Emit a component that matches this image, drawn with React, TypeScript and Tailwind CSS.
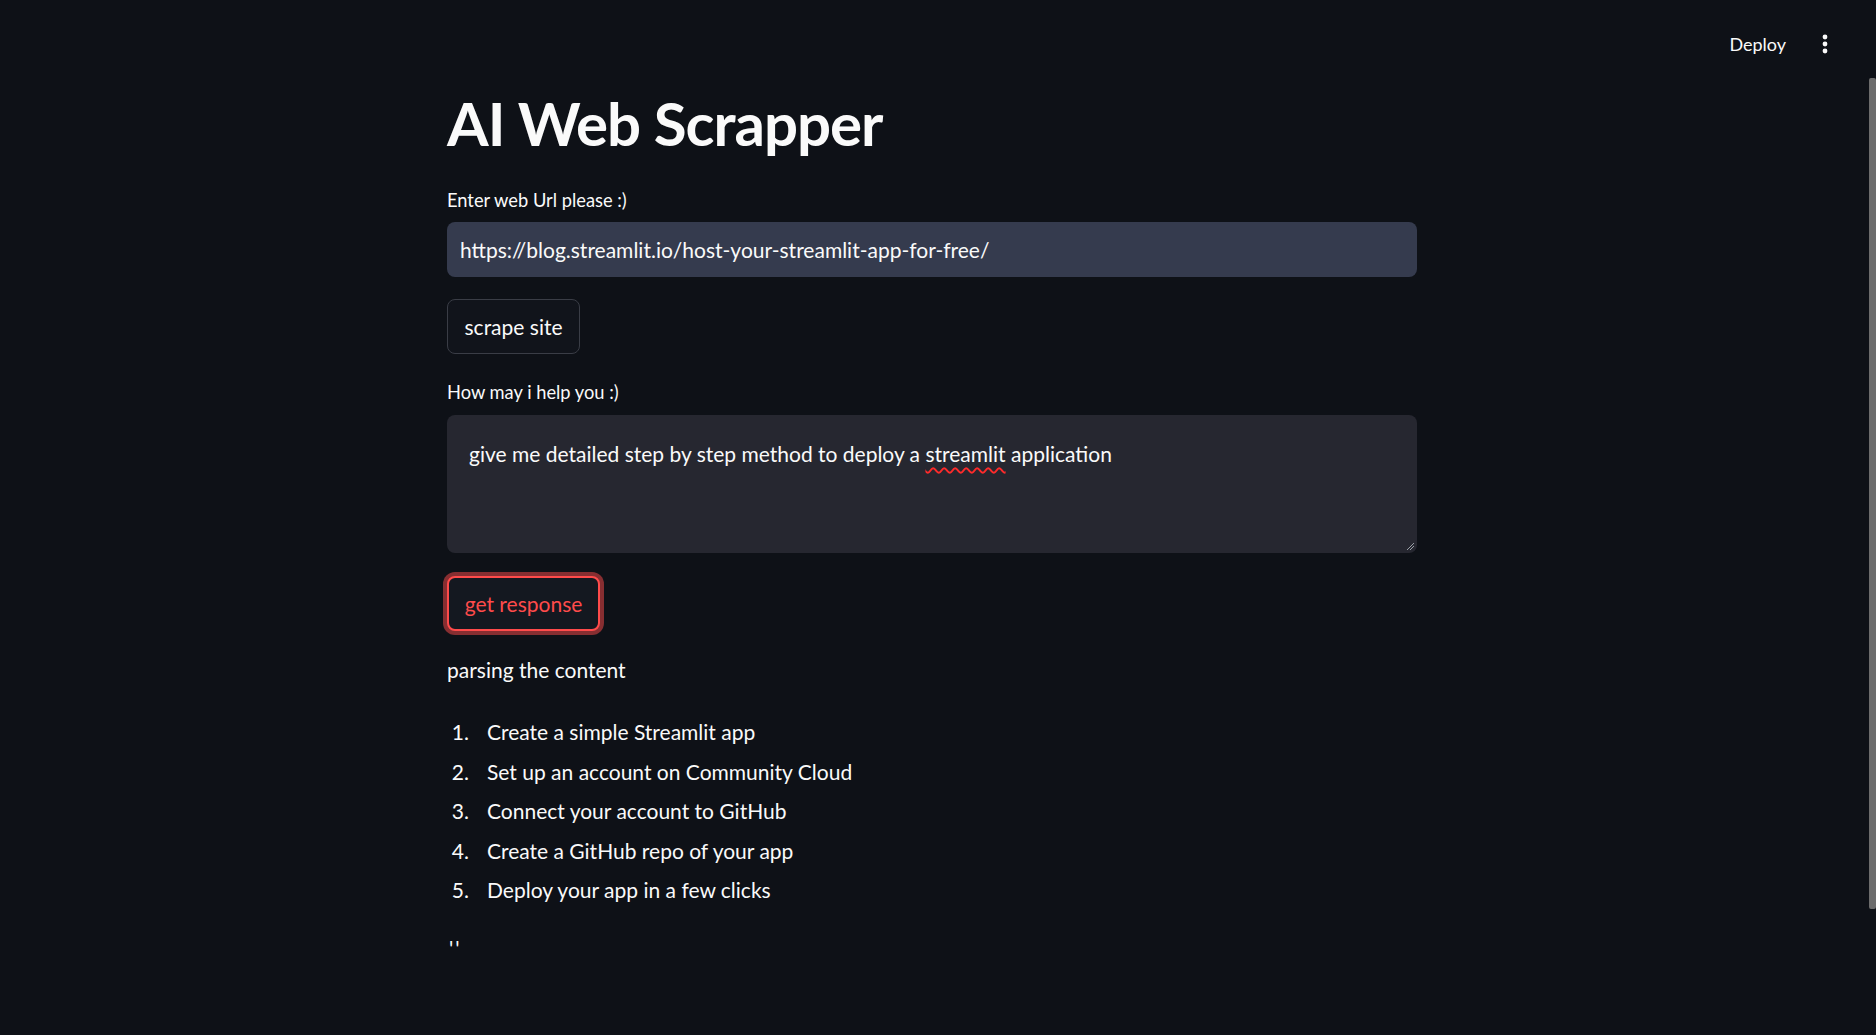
import React from "react";

export default function App() {
  const steps = [
    "Create a simple Streamlit app",
    "Set up an account on Community Cloud",
    "Connect your account to GitHub",
    "Create a GitHub repo of your app",
    "Deploy your app in a few clicks",
  ];
  return (
    <div className="relative h-[1035px] w-full overflow-hidden bg-[#0e1117] text-[#fafafa] [font-family:Lato,'Noto_Sans',sans-serif]">
      {/* header */}
      <div className="flex h-[88px] items-center justify-end pr-[47px]">
        <span className="text-[18px] leading-none text-[#fafafa]">Deploy</span>
        <svg className="ml-[35px]" width="8" height="20" viewBox="0 0 8 20">
          <circle cx="4" cy="3" r="2.4" fill="#fafafa" />
          <circle cx="4" cy="10" r="2.4" fill="#fafafa" />
          <circle cx="4" cy="17" r="2.4" fill="#fafafa" />
        </svg>
      </div>

      {/* main */}
      <div className="flex justify-center pr-[12px]">
        <div className="flex w-[970px] flex-col">
          <h1 className="mt-[4px] text-[60px] font-bold leading-[62px] tracking-[-1px]">
            AI Web Scrapper
          </h1>

          <label className="mt-[34px] text-[18.3px] leading-[24px]">Enter web Url please :)</label>
          <div className="mt-[10px] flex h-[55px] items-center rounded-[8px] bg-[#353b4e] pl-[13px] text-[21px]">
            https://blog.streamlit.io/host-your-streamlit-app-for-free/
          </div>

          <div className="mt-[22px]">
            <button className="h-[55px] w-[133px] rounded-[8px] border border-[#3a3d46] bg-[#11141b] text-[21px] text-[#fafafa]">
              scrape site
            </button>
          </div>

          <label className="mt-[26px] text-[18.3px] leading-[24px]">How may i help you :)</label>
          <div className="relative mt-[11px] h-[138px] rounded-[8px] bg-[#262730] p-[22px] text-[21px] leading-[33px]">
            give me detailed step by step method to deploy a{" "}
            <span className="underline decoration-wavy decoration-[#ff2a2a] decoration-[1.5px] underline-offset-[5px]">
              streamlit
            </span>{" "}
            application
            <svg className="absolute bottom-[2px] right-[2px]" width="10" height="10" viewBox="0 0 10 10">
              <line x1="2" y1="9" x2="9" y2="2" stroke="#9aa0a6" strokeWidth="1" />
              <line x1="5" y1="9" x2="9" y2="5" stroke="#9aa0a6" strokeWidth="1" />
            </svg>
          </div>

          <div className="mt-[23px]">
            <button className="h-[55px] w-[153px] rounded-[8px] border-2 border-[#ff4b4b] bg-[#141820] text-[21px] text-[#ff4b4b] shadow-[0_0_0_4px_rgba(255,75,75,0.5)]">
              get response
            </button>
          </div>

          <p className="mt-[22px] text-[21px] leading-[33px]">parsing the content</p>

          <ol className="mt-[29px] flex flex-col gap-[6.5px]">
            {steps.map((s, i) => (
              <li key={i} className="flex text-[21px] leading-[33px]">
                <span className="w-[22px] text-right">{i + 1}.</span>
                <span className="ml-[18px]">{s}</span>
              </li>
            ))}
          </ol>

          <p className="mt-[25px] pl-[2px] text-[21px] leading-[33px] tracking-[2px]">''</p>
        </div>
      </div>

      {/* scrollbar thumb overlay */}
      <div className="absolute right-0 top-[78px] h-[831px] w-[7px] rounded-[2px] bg-[#6c6c6c]" />
    </div>
  );
}
